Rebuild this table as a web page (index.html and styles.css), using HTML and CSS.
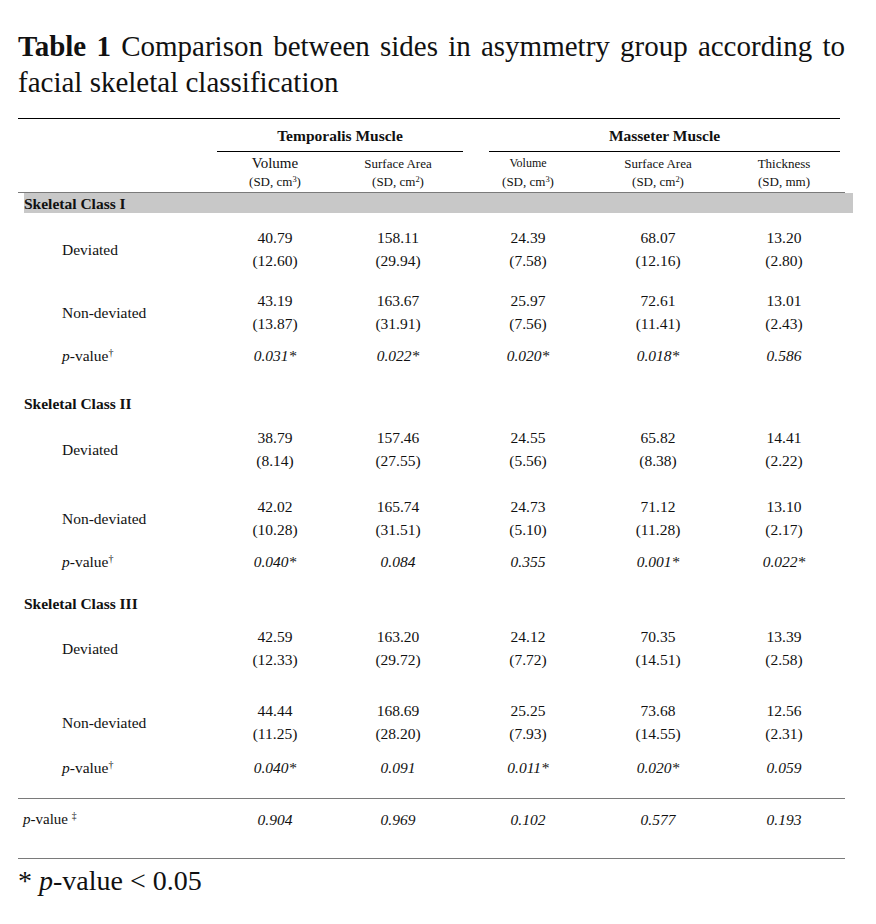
FILE: index.html
```html
<!DOCTYPE html>
<html>
<head>
<meta charset="utf-8">
<link rel="stylesheet" href="styles.css">
</head>
<body>
<div class="page">
  <p class="title"><b>Table 1</b> Comparison between sides in asymmetry group according to facial skeletal classification</p>

  <div class="table">
    <div class="rule-top"></div>
    <div class="row head1">
      <div></div>
      <div class="grp grp-t">Temporalis Muscle</div>
      <div></div>
      <div class="grp grp-m">Masseter Muscle</div>
    </div>
    <div class="row head2">
      <div></div>
      <div class="hc"><span class="h-big">Volume</span><span class="h-unit">(SD, cm<sup>3</sup>)</span></div>
      <div class="hc"><span class="h-sm">Surface Area</span><span class="h-unit">(SD, cm<sup>2</sup>)</span></div>
      <div></div>
      <div class="hc"><span class="h-xs">Volume</span><span class="h-unit">(SD, cm<sup>3</sup>)</span></div>
      <div class="hc"><span class="h-sm">Surface Area</span><span class="h-unit">(SD, cm<sup>2</sup>)</span></div>
      <div class="hc"><span class="h-sm">Thickness</span><span class="h-unit">(SD, mm)</span></div>
    </div>
    <div class="rule-gray rule-head"></div>
    <div class="band">Skeletal Class I</div>

    <div class="row data mt13">
      <div class="lbl">Deviated</div>
      <div class="v">40.79<br>(12.60)</div>
      <div class="v">158.11<br>(29.94)</div>
      <div></div>
      <div class="v">24.39<br>(7.58)</div>
      <div class="v">68.07<br>(12.16)</div>
      <div class="v">13.20<br>(2.80)</div>
    </div>
    <div class="row data mt17">
      <div class="lbl">Non-deviated</div>
      <div class="v">43.19<br>(13.87)</div>
      <div class="v">163.67<br>(31.91)</div>
      <div></div>
      <div class="v">25.97<br>(7.56)</div>
      <div class="v">72.61<br>(11.41)</div>
      <div class="v">13.01<br>(2.43)</div>
    </div>
    <div class="row pv mt9">
      <div class="lbl"><i>p</i>-value<sup>†</sup></div>
      <div class="v">0.031*</div>
      <div class="v">0.022*</div>
      <div></div>
      <div class="v">0.020*</div>
      <div class="v">0.018*</div>
      <div class="v">0.586</div>
    </div>

    <div class="cls mt25">Skeletal Class II</div>
    <div class="row data mt11">
      <div class="lbl">Deviated</div>
      <div class="v">38.79<br>(8.14)</div>
      <div class="v">157.46<br>(27.55)</div>
      <div></div>
      <div class="v">24.55<br>(5.56)</div>
      <div class="v">65.82<br>(8.38)</div>
      <div class="v">14.41<br>(2.22)</div>
    </div>
    <div class="row data mt23">
      <div class="lbl">Non-deviated</div>
      <div class="v">42.02<br>(10.28)</div>
      <div class="v">165.74<br>(31.51)</div>
      <div></div>
      <div class="v">24.73<br>(5.10)</div>
      <div class="v">71.12<br>(11.28)</div>
      <div class="v">13.10<br>(2.17)</div>
    </div>
    <div class="row pv mt9">
      <div class="lbl"><i>p</i>-value<sup>†</sup></div>
      <div class="v">0.040*</div>
      <div class="v">0.084</div>
      <div></div>
      <div class="v">0.355</div>
      <div class="v">0.001*</div>
      <div class="v">0.022*</div>
    </div>

    <div class="cls mt19">Skeletal Class III</div>
    <div class="row data mt10">
      <div class="lbl">Deviated</div>
      <div class="v">42.59<br>(12.33)</div>
      <div class="v">163.20<br>(29.72)</div>
      <div></div>
      <div class="v">24.12<br>(7.72)</div>
      <div class="v">70.35<br>(14.51)</div>
      <div class="v">13.39<br>(2.58)</div>
    </div>
    <div class="row data mt28">
      <div class="lbl">Non-deviated</div>
      <div class="v">44.44<br>(11.25)</div>
      <div class="v">168.69<br>(28.20)</div>
      <div></div>
      <div class="v">25.25<br>(7.93)</div>
      <div class="v">73.68<br>(14.55)</div>
      <div class="v">12.56<br>(2.31)</div>
    </div>
    <div class="row pv mt11">
      <div class="lbl"><i>p</i>-value<sup>†</sup></div>
      <div class="v">0.040*</div>
      <div class="v">0.091</div>
      <div></div>
      <div class="v">0.011*</div>
      <div class="v">0.020*</div>
      <div class="v">0.059</div>
    </div>

    <div class="rule-gray rule-foot1"></div>
    <div class="row total">
      <div class="lbl-total"><i>p</i>-value <sup>‡</sup></div>
      <div class="v">0.904</div>
      <div class="v">0.969</div>
      <div></div>
      <div class="v">0.102</div>
      <div class="v">0.577</div>
      <div class="v">0.193</div>
    </div>
    <div class="rule-gray rule-foot2"></div>
  </div>

  <p class="note">* <i>p</i>-value &lt; 0.05</p>
</div>
</body>
</html>
```

FILE: styles.css
```css
html, body {
  margin: 0;
  padding: 0;
  background: #ffffff;
}

body {
  font-family: "Liberation Serif", "Times New Roman", serif;
  color: #111111;
}

.page {
  width: 876px;
  padding-top: 28px;
}

.title {
  margin: 0 0 0 18px;
  width: 827px;
  font-size: 29px;
  line-height: 36px;
  text-align: justify;
}

.table {
  margin-top: 18px;
}

.rule-top {
  margin-left: 18px;
  width: 822px;
  height: 1px;
  background: #000000;
}

.row {
  display: grid;
  grid-template-columns: 199px 116px 130px 26px 78px 182px 70px 21px;
  margin-left: 18px;
  width: 822px;
}

.head1 {
  height: 33px;
  align-items: center;
}

.grp {
  font-weight: bold;
  font-size: 15.5px;
  text-align: center;
  height: 33px;
  line-height: 34px;
  box-sizing: border-box;
  border-bottom: 1px solid #000000;
}

.grp-t {
  grid-column: 2 / 4;
}

.grp-m {
  grid-column: 5 / 9;
}

.head2 {
  height: 40px;
}

.hc {
  display: flex;
  flex-direction: column;
  align-items: center;
  padding-top: 2px;
}

.h-big {
  font-size: 15px;
  line-height: 19px;
}

.h-sm {
  font-size: 13px;
  line-height: 19px;
}

.h-xs {
  font-size: 12px;
  line-height: 19px;
}

.h-unit {
  font-size: 13px;
  line-height: 18px;
}

.h-unit sup,
.lbl sup,
.lbl-total sup {
  font-size: 0.65em;
  line-height: 0;
  vertical-align: 0.5em;
}

.rule-gray {
  height: 1px;
  background: #7a7a7a;
}

.rule-head {
  margin-left: 18px;
  width: 827px;
}

.band {
  margin-left: 24px;
  width: 829px;
  height: 20px;
  line-height: 21px;
  background: #c8c8c8;
  font-weight: bold;
  font-size: 15.5px;
}

.cls {
  margin-left: 24px;
  height: 23px;
  line-height: 23px;
  font-weight: bold;
  font-size: 15.5px;
}

.data,
.pv,
.total {
  align-items: center;
  font-size: 15.5px;
  line-height: 23px;
}

.v {
  text-align: center;
}

.pv .v,
.total .v {
  font-style: italic;
}

.lbl {
  padding-left: 44px;
}

.lbl-total {
  padding-left: 5px;
  font-size: 15px;
}

.mt9 { margin-top: 9px; }
.mt10 { margin-top: 10px; }
.mt11 { margin-top: 11px; }
.mt13 { margin-top: 13px; }
.mt17 { margin-top: 17px; }
.mt19 { margin-top: 19px; }
.mt23 { margin-top: 23px; }
.mt25 { margin-top: 25px; }
.mt28 { margin-top: 28px; }

.rule-foot1 {
  margin-top: 19px;
  margin-left: 18px;
  width: 827px;
}

.total {
  margin-top: 9px;
}

.rule-foot2 {
  margin-top: 27px;
  margin-left: 18px;
  width: 827px;
}

.note {
  margin: 6px 0 0 18px;
  font-size: 28px;
  line-height: 32px;
}
```
